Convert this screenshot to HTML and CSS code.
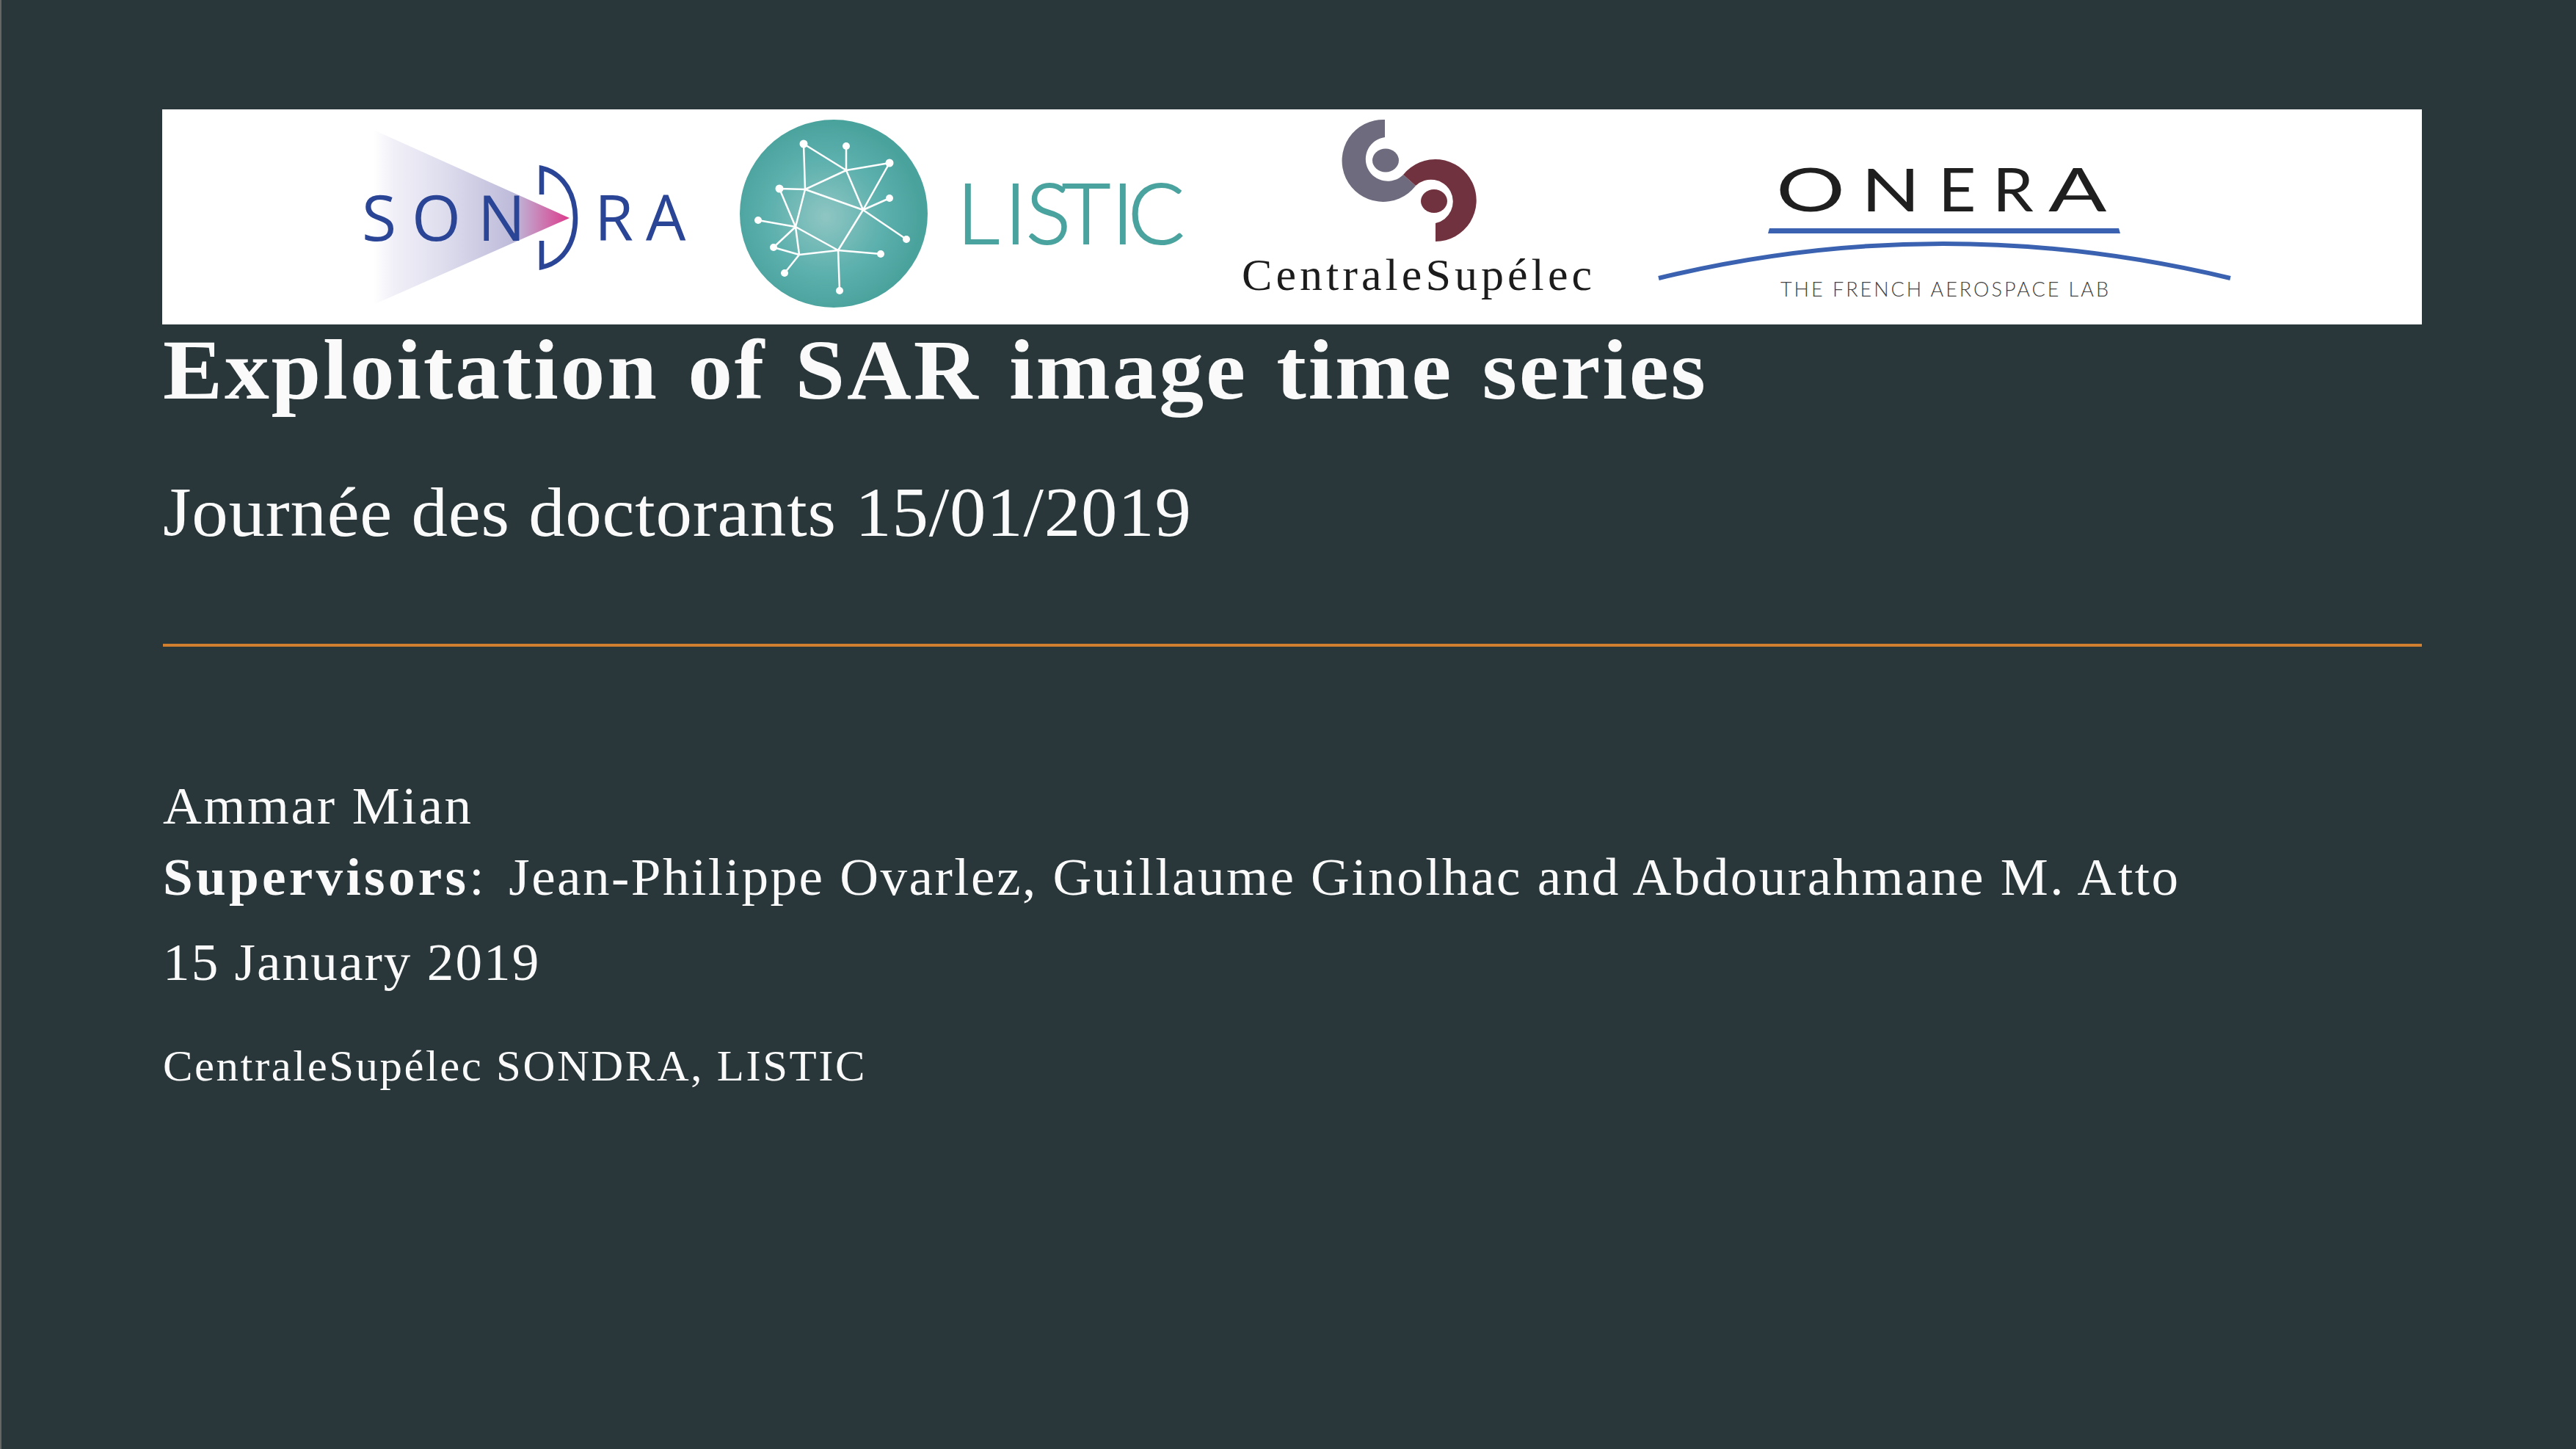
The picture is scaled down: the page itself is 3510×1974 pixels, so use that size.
FILE: index.html
```html
<!doctype html>
<html lang="en">

<head>
    <meta charset="utf-8">
    <title>Exploitation of SAR image time series</title>
    <link rel="stylesheet" href="styles.css">
</head>

<body>
    <div id="slide">
        <div class="banner">
            <svg class="logo sondra" viewBox="490 149 450 293">
                <defs>
                    <linearGradient id="beam" gradientUnits="userSpaceOnUse" x1="509" y1="0" x2="776" y2="0">
                        <stop offset="0" stop-color="#ffffff"></stop>
                        <stop offset="0.1" stop-color="#f1f0f8"></stop>
                        <stop offset="0.35" stop-color="#dfdeee"></stop>
                        <stop offset="0.72" stop-color="#bcbad9"></stop>
                        <stop offset="1" stop-color="#dc3a8b"></stop>
                    </linearGradient>
                </defs>
                <polygon points="509,177 776,297 509,415" fill="url(#beam)"></polygon>
                <text class="sondra-text" x="493 561 651" y="328">SON</text>
                <text class="sondra-text" x="810 880" y="328">RA</text>
                <path class="sondra-dish" d="M738,265 V229 C768,236 784,265 784,297 C784,330 768,358 738,364 V328"></path>
            </svg>
            <svg class="logo listic" viewBox="1000 149 620 293">
                <defs>
                    <radialGradient id="disc" gradientUnits="userSpaceOnUse" cx="1125" cy="295" r="130">
                        <stop offset="0" stop-color="#8fc6c3"></stop>
                        <stop offset="0.6" stop-color="#5cb0ad"></stop>
                        <stop offset="1" stop-color="#4aa29d"></stop>
                    </radialGradient>
                </defs>
                <circle cx="1136" cy="291" r="128" fill="url(#disc)"></circle>
                <path class="net" d="M1095,196 L1097,258 M1095,196 L1153,232 M1153,199 L1153,232 M1153,232 L1212,222 M1212,222 L1176,286 M1153,232 L1176,286 M1153,232 L1097,258 M1062,257 L1097,258 M1097,258 L1176,286 M1062,257 L1084,309 M1097,258 L1084,309 M1212,270 L1176,286 M1176,286 L1235,326 M1176,286 L1142,341 M1033,300 L1084,309 M1084,309 L1054,337 M1084,309 L1089,347 M1084,309 L1142,341 M1054,337 L1089,347 M1089,347 L1142,341 M1142,341 L1200,346 M1142,341 L1144,396 M1089,347 L1069,372"></path>
                <g class="nodes">
                    <circle cx="1095" cy="196" r="5.5"></circle>
                    <circle cx="1153" cy="199" r="5"></circle>
                    <circle cx="1212" cy="222" r="5.5"></circle>
                    <circle cx="1062" cy="257" r="5.5"></circle>
                    <circle cx="1212" cy="270" r="5"></circle>
                    <circle cx="1033" cy="300" r="5"></circle>
                    <circle cx="1235" cy="326" r="5"></circle>
                    <circle cx="1054" cy="337" r="5"></circle>
                    <circle cx="1200" cy="346" r="5"></circle>
                    <circle cx="1069" cy="372" r="5"></circle>
                    <circle cx="1144" cy="396" r="5"></circle>
                </g>
                <text class="listic-text" x="1304 1369 1398 1447 1515 1537" y="332">LISTIC</text>
            </svg>
            <svg class="logo centrale" viewBox="1685 149 490 293">
                <path fill="#6f6b7e" d="M1887,163 A56,56 0 1 0 1929,253 L1912,238 A30,30 0 1 1 1887,187 Z"></path>
                <ellipse cx="1888" cy="218.500" rx="18" ry="16" fill="#6f6b7e"></ellipse>
                <path fill="#71323f" d="M1956,329 A56,56 0 1 0 1912,238 L1929,253 A30,30 0 1 1 1956,304 Z"></path>
                <ellipse cx="1954" cy="274" rx="18" ry="16" fill="#71323f"></ellipse>
                <text class="centrale-text" x="1692" y="395" textLength="477">CentraleSupélec</text>
            </svg>
            <svg class="logo onera" viewBox="2255 149 790 293">
                <text class="onera-text" transform="translate(2420 288) scale(1.45 1)">O</text>
                <text class="onera-text" transform="translate(2536 288) scale(1.3 1)">N</text>
                <text class="onera-text" transform="translate(2641 288) scale(1.1 1)">E</text>
                <text class="onera-text" transform="translate(2715 288) scale(1.1 1)">R</text>
                <text class="onera-text" transform="translate(2791 288) scale(1.45 1)">A</text>
                <polygon fill="#3a62b0" points="2411,311 2887,311 2889,318 2409,318"></polygon>
                <path class="onera-arc" d="M2260,379 Q2646,285 3039,379"></path>
                <text class="onera-tag" x="2426" y="404" textLength="447">THE FRENCH AEROSPACE LAB</text>
            </svg>
        </div>

        <h1 class="title">Exploitation of SAR image time series</h1>
        <div class="subtitle wide">Journée des doctorants 15/01/2019</div>
        <hr class="rule">
        <div class="author wide">Ammar Mian</div>
        <div class="supervisors wide"><b>Supervisors</b><span class="colon">:</span> Jean-Philippe Ovarlez, Guillaume Ginolhac and Abdourahmane M. Atto</div>
        <div class="date wide">15 January 2019</div>
        <div class="institute wide">CentraleSupélec SONDRA, LISTIC</div>
    </div>
</body>

</html>
```

FILE: styles.css
```css
html, body {
    margin: 0;
    height: 100%;
}

body {
    background: #29373b;
    color: #fafafa;
    font-family: "Liberation Serif", serif;
    overflow: hidden;
}

#slide {
    height: 1974px;
    box-sizing: border-box;
    padding: 149px 210px 0 220px;
    border-left: 2px solid #666666;
}

.banner {
    display: flex;
    height: 293px;
    margin-left: -1px;
    padding-left: 269px;
    box-sizing: border-box;
    background: #ffffff;
    gap: 60px;
}

.logo {
    display: block;
    height: 293px;
    flex: none;
}

.sondra { width: 450px; }
.listic { width: 620px; }
.centrale { width: 490px; margin-left: 5px; }
.onera { width: 790px; margin-left: 20px; }

.sondra-text {
    font-family: "Open Sans", sans-serif;
    font-size: 86px;
    fill: #2b4596;
}

.sondra-dish {
    fill: none;
    stroke: #2b4596;
    stroke-width: 6.500;
}

.net {
    fill: none;
    stroke: #ffffff;
    stroke-width: 2.500;
}

.nodes {
    fill: #ffffff;
}

.listic-text {
    font-family: Lato, sans-serif;
    font-weight: 300;
    font-size: 114px;
    fill: #4aa39e;
    stroke: #4aa39e;
    stroke-width: 2px;
}

.centrale-text {
    font-family: "Liberation Serif", serif;
    font-size: 62px;
    fill: #1c1c1c;
}

.onera-text {
    font-family: Lato, sans-serif;
    font-size: 81px;
    fill: #1f1f1f;
}

.onera-arc {
    fill: none;
    stroke: #3a62b0;
    stroke-width: 6;
}

.onera-tag {
    font-family: Lato, sans-serif;
    font-weight: 300;
    font-size: 27px;
    fill: #444444;
}

/* the slide's serif runs wider than Liberation Serif */
.wide {
    transform: scaleX(1.03);
    transform-origin: left;
}

.title {
    margin: 2px 0 0;
    font-size: 116px;
    line-height: 120px;
    font-weight: 700;
    letter-spacing: 2.600px;
    word-spacing: 6px;
    transform: scaleX(1.05);
    transform-origin: left;
}

.subtitle {
    margin-top: 74px;
    font-size: 96px;
    line-height: 120px;
    letter-spacing: 0.760px;
}

.rule {
    margin: 119px 0 0;
    border: none;
    height: 4px;
    background: #d07e30;
}

.author,
.supervisors,
.date {
    font-size: 71px;
    line-height: 90px;
}

.author {
    margin-top: 172px;
    letter-spacing: 2.600px;
}

.supervisors {
    margin-top: 7px;
    letter-spacing: 2.400px;
}

.supervisors b {
    letter-spacing: 4.200px;
}

.colon {
    margin-right: 10px;
}

.date {
    margin-top: 26px;
    letter-spacing: 2px;
}

.institute {
    margin-top: 56px;
    font-size: 59px;
    line-height: 80px;
    letter-spacing: 2.470px;
}
```
